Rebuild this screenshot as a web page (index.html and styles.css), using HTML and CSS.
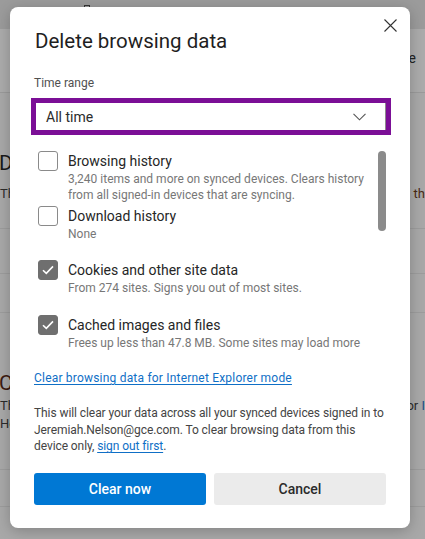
FILE: index.html
```html
<!DOCTYPE html>
<html lang="en">
<head>
<meta charset="utf-8">
<title>Delete browsing data</title>
<link rel="stylesheet" href="styles.css">
</head>
<body>
<div class="page">
  <div class="topbar"><span class="tb-icon"></span></div>
  <div class="band"><span class="band-text">Space</span></div>
  <div class="section s1">
    <div class="bg-heading">Delete</div>
    <div class="bg-line"><span>This</span><span class="bg-link">th</span></div>
  </div>
  <div class="bg-row r1"></div>
  <div class="bg-row r2"></div>
  <div class="section s2">
    <div class="bg-heading red">Cl</div>
    <div class="bg-line"><span>This</span><span>or <span class="blue">I</span></span></div>
    <div class="bg-line"><span>Help</span></div>
  </div>
  <div class="bg-row r3"></div>
</div>

<div class="dialog" role="dialog">
  <button class="close" aria-label="Close">
    <svg width="13" height="13" viewBox="0 0 13 13"><path d="M0.5 0.5 L12.5 12.5 M12.5 0.5 L0.5 12.5" stroke="#333" stroke-width="1.1" fill="none"/></svg>
  </button>
  <h1 class="title">Delete browsing data</h1>
  <div class="field-label">Time range</div>
  <div class="select">
    <span>All time</span>
    <svg width="13" height="8" viewBox="0 0 13 8"><path d="M0.5 0.8 L6.5 6.8 L12.5 0.8" stroke="#555" stroke-width="1.1" fill="none"/></svg>
  </div>
  <div class="list-wrap">
    <div class="list">
      <div class="item">
        <span class="cb"></span>
        <div class="item-text">
          <div class="item-label">Browsing history</div>
          <div class="item-sub">3,240 items and more on synced devices. Clears history from all signed-in devices that are syncing.</div>
        </div>
      </div>
      <div class="item">
        <span class="cb"></span>
        <div class="item-text">
          <div class="item-label">Download history</div>
          <div class="item-sub">None</div>
        </div>
      </div>
      <div class="item">
        <span class="cb checked"><svg width="12" height="10" viewBox="0 0 12 10"><path d="M1 5.2 L4.3 8.4 L11 1.4" stroke="#fff" stroke-width="1.6" fill="none"/></svg></span>
        <div class="item-text">
          <div class="item-label">Cookies and other site data</div>
          <div class="item-sub">From 274 sites. Signs you out of most sites.</div>
        </div>
      </div>
      <div class="item">
        <span class="cb checked"><svg width="12" height="10" viewBox="0 0 12 10"><path d="M1 5.2 L4.3 8.4 L11 1.4" stroke="#fff" stroke-width="1.6" fill="none"/></svg></span>
        <div class="item-text">
          <div class="item-label">Cached images and files</div>
          <div class="item-sub nowrap">Frees up less than 47.8 MB. Some sites may load more</div>
        </div>
      </div>
    </div>
    <div class="scrolltrack"><div class="thumb"></div></div>
  </div>
  <a class="ie-link" href="#">Clear browsing data for Internet Explorer mode</a>
  <p class="note">This will clear your data across all your synced devices signed in to Jeremiah.Nelson@gce.com. To clear browsing data from this device only, <a href="#">sign out first</a>.</p>
  <div class="buttons">
    <button class="btn primary">Clear now</button>
    <button class="btn secondary">Cancel</button>
  </div>
</div>
</body>
</html>
```
FILE: styles.css
```css
* { box-sizing: border-box; }
html, body { margin: 0; padding: 0; }
body {
  width: 425px;
  height: 539px;
  overflow: hidden;
  position: relative;
  font-family: Roboto, "Open Sans", sans-serif;
  background: #a8a8a8;
}

/* dimmed page behind the dialog */
.page { width: 425px; height: 539px; overflow: hidden; background: #a8a8a8; color: #1c1c1c; }
.topbar { height: 29px; background: #9b9b9b; padding: 5px 0 0 84px; }
.tb-icon { display: block; width: 6px; height: 6px; border: 1.5px solid #333; border-bottom: none; }
.band {
  height: 64px; background: #ababab; border-bottom: 1px solid #9a9a9a;
  display: flex; justify-content: flex-end; align-items: center; padding: 0 9px 6px 0;
  font-size: 14px; color: #222;
}
.section { border-bottom: 1px solid #9c9c9c; }
.s1 { height: 136px; padding-top: 56px; }
.s2 { height: 157px; padding-top: 56px; }
.bg-heading { font-size: 21px; line-height: 28px; color: #1a1a1a; white-space: nowrap; margin-left: -1px; }
.bg-heading.red { color: #3c1b12; }
.bg-line { display: flex; justify-content: space-between; font-size: 13px; line-height: 18px; color: #2b2b2b; }
.s1 .bg-line { margin-top: 8px; }
.s2 .bg-line:first-of-type { margin-top: 30px; }
.bg-link { color: #4a2a12; }
.blue { color: #1c4f86; }
.bg-row { border-bottom: 1px solid #9c9c9c; }
.r1 { height: 45px; }
.r2 { height: 39px; }
.r3 { height: 37px; }

/* dialog */
.dialog {
  position: absolute;
  left: 10px; top: 7px;
  width: 400px; height: 521px;
  background: #fff;
  border-radius: 8px;
  box-shadow: 0 3px 14px rgba(0,0,0,0.22);
  padding: 20px 24px 0 24px;
  display: flex; flex-direction: column;
}
.close {
  position: absolute; right: 8px; top: 6px;
  width: 24px; height: 24px; border: none; background: none; padding: 0;
  display: flex; align-items: center; justify-content: center;
}
.title {
  margin: 0; font-size: 20.5px; line-height: 28px; font-weight: 400; color: #1f1f1f;
  margin-left: 1px;
}
.field-label { margin-top: 20px; font-size: 12px; line-height: 16px; color: #505050; }
.select {
  margin-top: 7px; margin-left: -3px;
  width: 360px; height: 37px;
  border: 5px solid #7b0f96;
  box-shadow: inset -1px 0 0 #8c8c8c;
  display: flex; align-items: center; justify-content: space-between;
  padding: 0 20px 0 10px;
  font-size: 14px; color: #2b2b2b;
}
.select span { padding-top: 1px; }
.list-wrap { margin-top: 16px; display: flex; height: 218px; }
.list { flex: 1; }
.item { display: flex; height: 54.5px; }
.cb {
  flex: none; width: 20px; height: 20px; margin-left: 4px; margin-right: 10px;
  border: 1px solid #8a8a8a; border-radius: 3px; background: #fff;
  display: flex; align-items: center; justify-content: center;
}
.cb.checked { background: #6f6f6f; border-color: #6f6f6f; }
.item-label { font-size: 14px; line-height: 20px; color: #262626; }
.item-sub { font-size: 12px; line-height: 16px; color: #777; width: 296px; }
.item-sub.nowrap { white-space: nowrap; }
.scrolltrack { width: 8px; flex: none; }
.thumb { height: 80px; border-radius: 4px; background: #8b8b8b; }
.ie-link {
  margin-top: 1px; font-size: 12px; line-height: 16px; color: #0f6fc6;
  letter-spacing: 0.2px;
  text-decoration: underline; text-underline-offset: 2px; align-self: flex-start;
}
.note { margin: 19px 0 0 0; font-size: 12px; line-height: 16.5px; color: #444; letter-spacing: -0.08px; }
.note a { color: #0f6fc6; text-decoration: underline; text-underline-offset: 2px; }
.buttons { margin-top: 18px; display: flex; gap: 8px; }
.btn {
  flex: 1; height: 32px; border: none; border-radius: 3px;
  font-family: inherit; font-size: 14px; font-weight: 500;
}
.primary { background: #0078d4; color: #fff; }
.secondary { background: #ebebeb; color: #2b2b2b; }
```
